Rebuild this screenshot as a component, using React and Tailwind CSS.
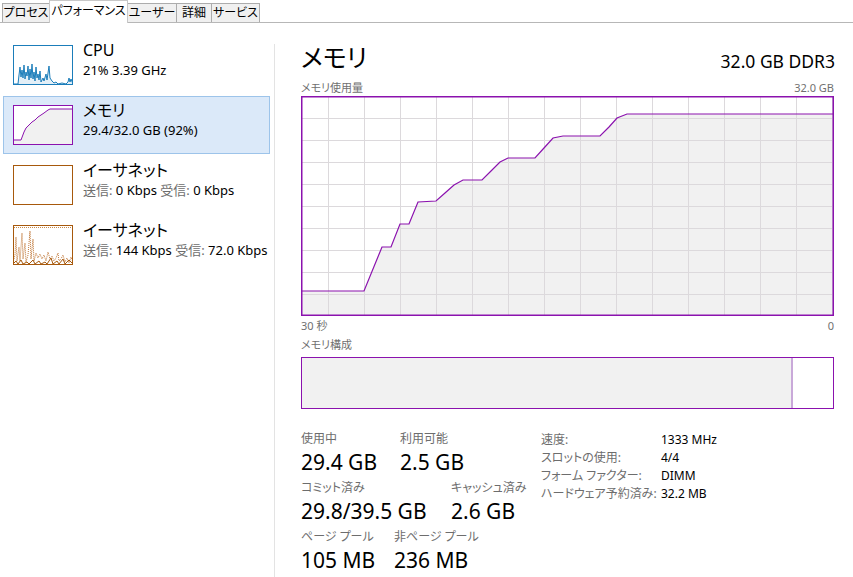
import React from "react";

const tabs = [
  { label: "プロセス", w: "w-[48px]" },
  { label: "パフォーマンス", w: "w-[79px]", active: true },
  { label: "ユーザー", w: "w-[50px]" },
  { label: "詳細", w: "w-[36px]" },
  { label: "サービス", w: "w-[49px]" },
];

function CpuThumb() {
  const pts = [
    [0, 39], [5, 39], [6, 30], [7, 22], [8, 32], [9, 25], [10, 33], [11, 20], [12, 34], [13, 27], [14, 31],
    [15, 21], [16, 35], [17, 24], [18, 33], [19, 19], [20, 34], [21, 27], [22, 36], [23, 22], [24, 33],
    [25, 29], [26, 35], [27, 26], [28, 37], [30, 33], [31, 36], [33, 29], [34, 35], [36, 21], [37, 33],
    [39, 36], [41, 38], [43, 37], [45, 39], [49, 38], [53, 39], [55, 37], [56, 33], [57, 37], [58, 34], [60, 39],
  ];
  const line = pts.map((p) => p.join(",")).join(" ");
  const area = `0,40 ${line} 60,40`;
  return (
    <svg width="60" height="40" viewBox="0 0 60 40" className="shrink-0">
      <rect x="0" y="0" width="60" height="40" fill="#ffffff" />
      <polygon points={area} fill="#e3eff7" />
      <polyline points={line} fill="none" stroke="#1b7dba" strokeWidth="1" />
      <rect x="0.5" y="0.5" width="59" height="39" fill="none" stroke="#1b7dba" strokeWidth="1" />
    </svg>
  );
}

function MemThumb() {
  const pts = [
    [0, 35], [8, 35], [11, 27], [13, 23], [16, 20], [19, 17], [22, 15], [25, 12], [28, 10], [31, 8], [35, 5], [37, 4], [60, 4],
  ];
  const line = pts.map((p) => p.join(",")).join(" ");
  const area = `0,40 ${line} 60,40`;
  return (
    <svg width="60" height="40" viewBox="0 0 60 40" className="shrink-0">
      <rect x="0" y="0" width="60" height="40" fill="#ffffff" />
      <polygon points={area} fill="#f1f1f1" />
      <polyline points={line} fill="none" stroke="#8b12ae" strokeWidth="1" />
      <rect x="0.5" y="0.5" width="59" height="39" fill="none" stroke="#8b12ae" strokeWidth="1" />
    </svg>
  );
}

function EthThumb({ active }) {
  const dotted = [
    [0, 38], [2, 30], [3, 12], [4, 36], [6, 22], [7, 36], [9, 8], [10, 34], [12, 18], [13, 37], [15, 30],
    [17, 6], [18, 34], [20, 14], [21, 36], [23, 28], [25, 33], [27, 29], [29, 34], [31, 30], [33, 36],
    [35, 27], [37, 34], [39, 31], [41, 36], [43, 33], [45, 28], [46, 36], [48, 34], [50, 30], [52, 37],
    [54, 33], [56, 38], [58, 32], [60, 37],
  ];
  const solid = [
    [0, 39], [3, 36], [5, 39], [8, 35], [10, 39], [14, 37], [16, 39], [20, 35], [22, 39], [26, 36],
    [28, 39], [32, 37], [34, 39], [38, 33], [40, 39], [44, 36], [46, 39], [50, 34], [52, 39], [56, 35], [60, 39],
  ];
  return (
    <svg width="60" height="40" viewBox="0 0 60 40" className="shrink-0">
      <rect x="0" y="0" width="60" height="40" fill="#ffffff" />
      {active && (
        <>
          <line x1="1" y1="2.5" x2="59" y2="2.5" stroke="#c98a4a" strokeWidth="1" strokeDasharray="1 1" />
          <polyline points={dotted.map((p) => p.join(",")).join(" ")} fill="none" stroke="#c2793a" strokeWidth="1" strokeDasharray="1 1" />
          <polyline points={solid.map((p) => p.join(",")).join(" ")} fill="none" stroke="#a7590c" strokeWidth="1" />
        </>
      )}
      <rect x="0.5" y="0.5" width="59" height="39" fill="none" stroke="#a7590c" strokeWidth="1" />
    </svg>
  );
}

function SideItem({ thumb, title, sub, selected }) {
  return (
    <div
      className={
        "ml-[3px] w-[267px] h-[58px] border flex items-start pl-[9px] pt-[8px] gap-[10px] " +
        (selected ? "bg-[#dbe9f9] border-[#9dc4ea]" : "border-transparent")
      }
    >
      {thumb}
      <div className="flex flex-col -mt-[5px]">
        <div className="text-[16px] leading-[20px] text-black">{title}</div>
        <div className="mt-[2px] text-[13px] leading-[16px] text-black whitespace-nowrap">{sub}</div>
      </div>
    </div>
  );
}

function MainGraph() {
  const pts = [
    [0, 195], [63, 195], [81, 151], [90, 151], [99, 128], [108, 128], [117, 106], [135, 105], [144, 97],
    [153, 89], [162, 84], [181, 84], [190, 75], [199, 66], [207, 62], [234, 62], [243, 52], [252, 42],
    [262, 40], [299, 40], [308, 31], [316, 22], [326, 18], [533, 18],
  ];
  const line = pts.map((p) => p.join(",")).join(" ");
  const area = `0,220 ${line} 533,220`;
  const vx = [];
  for (let x = 27; x < 533; x += 36) vx.push(x);
  const hy = [];
  for (let y = 22; y < 220; y += 22) hy.push(y);
  return (
    <svg width="533" height="220" viewBox="0 0 533 220" className="block">
      <rect x="0" y="0" width="533" height="220" fill="#ffffff" />
      <polygon points={area} fill="#f1f1f1" />
      {vx.map((x) => (
        <line key={"v" + x} x1={x + 0.5} y1="0" x2={x + 0.5} y2="220" stroke="#dcd9dc" strokeWidth="1" />
      ))}
      {hy.map((y) => (
        <line key={"h" + y} x1="0" y1={y + 0.5} x2="533" y2={y + 0.5} stroke="#dcd9dc" strokeWidth="1" />
      ))}
      <polyline points={line} fill="none" stroke="#8b12ae" strokeWidth="1.2" />
      <rect x="0.75" y="0.75" width="531.5" height="218.5" fill="none" stroke="#8b12ae" strokeWidth="1.5" />
    </svg>
  );
}

function Stat({ label, value, w }) {
  return (
    <div className={"flex flex-col " + (w || "")}>
      <div className="text-[12px] leading-[16px] text-[#6d6d6d] whitespace-nowrap">{label}</div>
      <div className="mt-[3px] text-[21px] leading-[24px] text-black whitespace-nowrap">{value}</div>
    </div>
  );
}

export default function App() {
  return (
    <div className="w-[853px] h-[577px] overflow-hidden bg-white text-black font-['Noto_Sans','Noto_Sans_CJK_JP',sans-serif] [font-feature-settings:'palt']">
      {/* Tabs */}
      <div className="h-[23px] flex items-end pl-[2px] border-b border-[#b7b7b7]">
        {tabs.map((t, i) =>
          t.active ? (
            <div
              key={t.label}
              className={t.w + " h-[23px] -mb-[1px] -ml-[1px] relative z-10 bg-white border border-b-0 border-[#c8c8c8] flex items-center justify-center text-[12px] leading-[16px] pb-[2px]"}
            >
              {t.label}
            </div>
          ) : (
            <div
              key={t.label}
              className={t.w + " h-[19px] " + (i > 0 ? "-ml-[1px] " : "") + "bg-[#f0f0f0] border border-b-0 border-[#acacac] flex items-center justify-center text-[12px] leading-[16px]"}
            >
              {t.label}
            </div>
          )
        )}
      </div>

      {/* Body */}
      <div className="flex h-[554px]">
        {/* Sidebar */}
        <div className="w-[274px] pt-[13px] flex flex-col gap-[2px]">
          <SideItem thumb={<CpuThumb />} title="CPU" sub="21% 3.39 GHz" />
          <SideItem thumb={<MemThumb />} title="メモリ" sub="29.4/32.0 GB (92%)" selected />
          <SideItem
            thumb={<EthThumb />}
            title="イーサネット"
            sub={
              <>
                <span className="text-[#6d6d6d]">送信:</span> 0 Kbps <span className="text-[#6d6d6d]">受信:</span> 0 Kbps
              </>
            }
          />
          <SideItem
            thumb={<EthThumb active />}
            title="イーサネット"
            sub={
              <>
                <span className="text-[#6d6d6d]">送信:</span> 144 Kbps <span className="text-[#6d6d6d]">受信:</span> 72.0 Kbps
              </>
            }
          />
        </div>
        <div className="w-px bg-[#e3e3e3] mt-[21px]" />

        {/* Main */}
        <div className="pl-[26px] w-[560px] flex flex-col">
          <div className="mt-[19px] h-[37px] flex justify-between items-start">
            <div className="text-[25px] leading-[30px] text-black">メモリ</div>
            <div className="pt-[9px] text-[17.5px] leading-[20px] text-black">32.0 GB DDR3</div>
          </div>
          <div className="h-[17px] flex justify-between text-[11px] leading-[17px] text-[#707070]">
            <span>メモリ使用量</span>
            <span className="pr-[1px]">32.0 GB</span>
          </div>
          <MainGraph />
          <div className="h-[20px] flex justify-between text-[11px] leading-[20px] text-[#707070]">
            <span>30 秒</span>
            <span className="pr-[1px]">0</span>
          </div>
          <div className="h-[18px] text-[11px] leading-[18px] text-[#707070]">メモリ構成</div>
          <div className="mt-[3px] h-[52px] w-[533px] border-[1.5px] border-[#8b12ae] flex">
            <div className="w-[491px] h-full bg-[#f1f1f1] border-r-2 border-[#c9a9d9]" />
            <div className="flex-1 h-full bg-white" />
          </div>

          {/* Stats */}
          <div className="mt-[22px] flex">
            <div className="w-[240px] flex flex-col gap-[6px]">
              <div className="flex">
                <Stat label="使用中" value="29.4 GB" w="w-[99px]" />
                <Stat label="利用可能" value="2.5 GB" />
              </div>
              <div className="flex">
                <Stat label="コミット済み" value="29.8/39.5 GB" w="w-[150px]" />
                <Stat label="キャッシュ済み" value="2.6 GB" />
              </div>
              <div className="flex">
                <Stat label="ページ プール" value="105 MB" w="w-[93px]" />
                <Stat label="非ページ プール" value="236 MB" />
              </div>
            </div>
            <div className="grid grid-cols-[120px_auto] auto-rows-[18px] text-[12px] leading-[18px]">
              <span className="text-[#6d6d6d]">速度:</span>
              <span>1333 MHz</span>
              <span className="text-[#6d6d6d]">スロットの使用:</span>
              <span>4/4</span>
              <span className="text-[#6d6d6d]">フォーム ファクター:</span>
              <span>DIMM</span>
              <span className="text-[#6d6d6d]">ハードウェア予約済み:</span>
              <span>32.2 MB</span>
            </div>
          </div>
        </div>
      </div>
    </div>
  );
}
